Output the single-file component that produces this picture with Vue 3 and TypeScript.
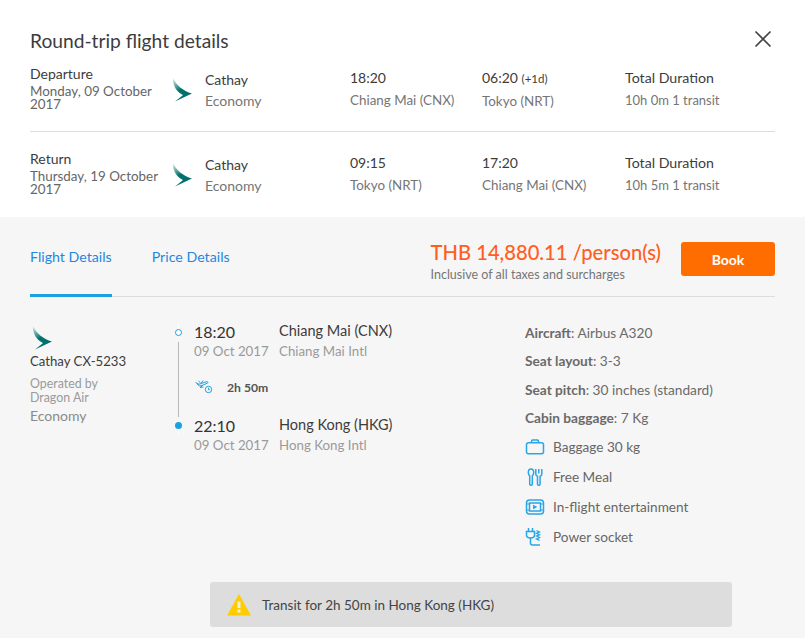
<script setup lang="ts">
interface Leg {
  label: string; date: string; dep: string; depCity: string; arr: string; arrSuffix?: string; arrCity: string; duration: string;
}
const legs: Leg[] = [
  { label: 'Departure', date: 'Monday, 09 October 2017', dep: '18:20', depCity: 'Chiang Mai (CNX)', arr: '06:20', arrSuffix: '(+1d)', arrCity: 'Tokyo (NRT)', duration: '10h 0m 1 transit' },
  { label: 'Return', date: 'Thursday, 19 October 2017', dep: '09:15', depCity: 'Tokyo (NRT)', arr: '17:20', arrCity: 'Chiang Mai (CNX)', duration: '10h 5m 1 transit' },
];
const specs = [
  { k: 'Aircraft', v: 'Airbus A320' },
  { k: 'Seat layout', v: '3-3' },
  { k: 'Seat pitch', v: '30 inches (standard)' },
  { k: 'Cabin baggage', v: '7 Kg' },
];
</script>

<template>
  <div class="page">
    <section class="top">
      <header class="head">
        <h1>Round-trip flight details</h1>
        <svg class="close" width="18" height="18" viewBox="0 0 18 18"><path d="M1.500 1.500l15 15M16.500 1.500l-15 15" stroke="#444" stroke-width="1.700" fill="none"/></svg>
      </header>
      <div v-for="(l, i) in legs" :key="l.label" class="leg" :class="{ second: i === 1 }">
        <div class="when">
          <div class="label">{{ l.label }}</div>
          <div class="date">{{ l.date }}</div>
        </div>
        <svg class="logo" width="22" height="25" viewBox="0 0 22 25">
          <defs><linearGradient :id="'g' + i" x1="0" y1="0" x2="0.3" y2="0.55"><stop offset="0" stop-color="#0f7a78" stop-opacity="0.12"/><stop offset="1" stop-color="#00706e"/></linearGradient></defs>
          <path d="M1 0C4 7 11 13 20 15.500L3 23.500C6 21 9 19 11 17C5 14 .5 8 1 0Z" :fill="'url(#g' + i + ')'"/>
        </svg>
        <div class="cell air"><div class="main">Cathay</div><div class="sub">Economy</div></div>
        <div class="cell"><div class="main">{{ l.dep }}</div><div class="sub">{{ l.depCity }}</div></div>
        <div class="cell"><div class="main">{{ l.arr }} <small v-if="l.arrSuffix">{{ l.arrSuffix }}</small></div><div class="sub">{{ l.arrCity }}</div></div>
        <div class="cell"><div class="main total">Total Duration</div><div class="sub dura">{{ l.duration }}</div></div>
      </div>
    </section>

    <section class="bottom">
      <div class="tabbar">
        <div class="tabs">
          <a class="tab active">Flight Details</a>
          <a class="tab">Price Details</a>
        </div>
        <div class="price">
          <div class="amount">THB 14,880.11 /person(s)</div>
          <div class="incl">Inclusive of all taxes and surcharges</div>
        </div>
        <button class="book">Book</button>
      </div>

      <div class="detail">
        <div class="carrier">
          <svg class="logo2" width="22" height="25" viewBox="0 0 22 25">
            <defs><linearGradient id="g9" x1="0" y1="0" x2="0.3" y2="0.55"><stop offset="0" stop-color="#0f7a78" stop-opacity="0.12"/><stop offset="1" stop-color="#00706e"/></linearGradient></defs>
            <path d="M1 0C4 7 11 13 20 15.500L3 23.500C6 21 9 19 11 17C5 14 .5 8 1 0Z" fill="url(#g9)"/>
          </svg>
          <div class="flightno">Cathay CX-5233</div>
          <div class="operated">Operated by<br>Dragon Air</div>
          <div class="cabin">Economy</div>
        </div>

        <div class="rail">
          <span class="stub"></span>
          <span class="dot hollow"></span>
          <span class="line"></span>
          <span class="dot filled"></span>
          <span class="stub"></span>
        </div>

        <div class="route">
          <div class="stop">
            <div class="time"><b>18:20</b><span>09 Oct 2017</span></div>
            <div class="place"><b>Chiang Mai (CNX)</b><span>Chiang Mai Intl</span></div>
          </div>
          <div class="dur">
            <svg width="18" height="14" viewBox="0 0 18 14" fill="none" stroke="#1ba0e2" stroke-width="1">
              <path d="M.5 2.500l3.500 1.800 7-2.500c1.800-.5 2.800.6 1.300 1.300L7 5.500 4.500 6 2 4"/>
              <path d="M3.500 1l2 1.800M8 .5L6.500 3M7.500 5.500L5 7.500l3.500-.5"/>
              <circle cx="13.500" cy="9.500" r="3.200"/>
              <path d="M13.500 7.800v1.900h1.300"/>
            </svg>
            <span>2h 50m</span>
          </div>
          <div class="stop">
            <div class="time"><b>22:10</b><span>09 Oct 2017</span></div>
            <div class="place"><b>Hong Kong (HKG)</b><span>Hong Kong Intl</span></div>
          </div>
        </div>

        <div class="facts">
          <div class="specs">
            <div v-for="s in specs" :key="s.k" class="spec"><b>{{ s.k }}</b>: {{ s.v }}</div>
          </div>
          <div class="amen">
            <svg width="20" height="16" viewBox="0 0 20 16" fill="none" stroke="#2aa5e6" stroke-width="1.500"><rect x="1.500" y="3.800" width="17" height="11" rx="2"/><path d="M6.500 3.500V2.200C6.500 1.500 7 1 7.700 1h4.600c.7 0 1.200.5 1.200 1.200v1.300"/></svg>
            <span>Baggage 30 kg</span>
          </div>
          <div class="amen">
            <svg width="20" height="18" viewBox="0 0 20 18" fill="none" stroke="#2aa5e6" stroke-width="1.500"><path d="M6 1c1.800 0 2.700 1.800 2.700 3.600 0 1.500-.7 2.700-1.400 3.200V16a1.300 1.300 0 0 1-2.600 0V7.800C4 7.300 3.300 6.100 3.300 4.600 3.300 2.800 4.200 1 6 1z"/><path d="M10.800 1v5c0 1.300.7 2 1.700 2.300V16a1.300 1.300 0 0 0 2.600 0V8.300c1-.3 1.700-1 1.700-2.300V1M13.800 1v4.500"/></svg>
            <span>Free Meal</span>
          </div>
          <div class="amen">
            <svg width="20" height="16" viewBox="0 0 20 16" fill="none" stroke="#2aa5e6" stroke-width="1.500"><rect x="1.500" y="1" width="17" height="14" rx="3"/><rect x="4.500" y="4" width="11" height="8"/><path d="M8 5.800l4.500 2.200L8 10.200z" fill="#2aa5e6" stroke="none"/><path d="M1.500 5h3M1.500 11h3M15.500 5h3M15.500 11h3" stroke-width="1"/></svg>
            <span>In-flight entertainment</span>
          </div>
          <div class="amen">
            <svg width="20" height="20" viewBox="0 0 20 20" fill="none" stroke="#2aa5e6" stroke-width="1.500"><path d="M3.500 1v3.500M7.500 1v3.500M1.500 4.500h8V8c0 1.800-1.700 3-4 3s-4-1.200-4-3z"/><path d="M5.500 11v5c0 1.200.8 2 2 2H15"/><path d="M11.500 3.500l3 1.400-3 1.400 3 1.400-3 1.400 3 1.400-3 1.400 3 1.400" stroke-width="1.300"/></svg>
            <span>Power socket</span>
          </div>
        </div>
      </div>

      <div class="alert">
        <svg width="24" height="22" viewBox="0 0 24 22"><path d="M12 0L24 21.500H0z" fill="#ffcc00"/><rect x="10.500" y="7.500" width="3" height="6.500" fill="#f0efe6"/><rect x="10.500" y="15.500" width="3" height="3" fill="#f0efe6"/></svg>
        <span>Transit for 2h 50m in Hong Kong (HKG)</span>
      </div>
    </section>
  </div>
</template>

<style>
html, body { margin: 0; background: #f6f6f6; }
</style>

<style scoped>
.page {
  width: 805px; height: 638px; overflow: hidden; display: flex; flex-direction: column;
  font-family: Lato, "Noto Sans", sans-serif; font-size: 14px; color: #3c3c3c; background: #f6f6f6;
}
.top { background: #fff; height: 217px; padding: 0 30px; box-sizing: border-box; flex: none; }
.head { height: 65px; display: flex; align-items: flex-start; justify-content: space-between; }
h1 { margin: 29px 0 0; font-size: 19.200px; line-height: 24px; font-weight: 400; color: #3c3c3c; }
.close { margin-top: 30px; margin-right: 3px; }
.leg {
  display: grid; grid-template-columns: 142px 33px 145px 132px 143px 1fr; align-items: start;
  height: 66px; border-bottom: 1px solid #ddd;
}
.leg.second { border-bottom: 0; margin-top: 18px; }
.label { font-size: 14px; line-height: 17px; color: #3c3c3c; }
.date { font-size: 13.400px; line-height: 13px; margin-top: 3px; color: #666; width: 135px; }
.logo { margin-top: 13px; }
.cell { padding-top: 4px; }
.cell.air { padding-top: 6px; }
.main { font-size: 14px; line-height: 17px; color: #3c3c3c; }
.main.total { font-size: 14.200px; }
.main small { font-size: 11.500px; }
.sub { font-size: 13.400px; line-height: 17px; margin-top: 6px; color: #757575; }
.cell.air .sub { font-size: 14px; margin-top: 4px; }
.sub.dura { font-size: 13px; }

.bottom { flex: 1; padding: 0 30px; }
.tabbar { display: flex; align-items: flex-start; height: 80px; border-bottom: 1px solid #ddd; box-sizing: border-box; }
.tabs { display: flex; gap: 40px; flex: 1; height: 80px; }
.tab { display: block; box-sizing: border-box; height: 80px; padding-top: 31px; line-height: 18px; font-size: 14.200px; color: #1f87e0; }
.tab.active { border-bottom: 3px solid #1ba0e2; }
.price { margin-top: 23px; margin-right: 20px; }
.amount { font-size: 20.200px; line-height: 24px; color: #ff5e1f; font-weight: 500; }
.incl { font-size: 12.500px; line-height: 14px; margin-top: 4px; color: #757575; }
.book {
  margin-top: 25px; width: 94px; height: 34px; border: 0; border-radius: 3px; background: #ff6d00;
  color: #fff; font: 700 14px Lato, sans-serif;
}

.detail { display: flex; align-items: flex-start; padding-top: 25px; height: 285px; box-sizing: border-box; }
.carrier { width: 145px; flex: none; margin-top: 4px; }
.logo2 { display: block; margin-left: 2px; }
.flightno { font-size: 13.200px; line-height: 16px; margin-top: 2px; color: #3c3c3c; }
.operated { font-size: 12.400px; line-height: 14px; margin-top: 8px; color: #9a9a9a; }
.cabin { font-size: 14px; line-height: 16px; margin-top: 3px; color: #8a8a8a; }

.rail { width: 19px; flex: none; display: flex; flex-direction: column; align-items: flex-start; margin-top: 2px; }
.stub { width: 1px; height: 5px; margin-left: 3px; background: #fff; }
.dot { width: 7px; height: 7px; border-radius: 50%; box-sizing: border-box; }
.dot.hollow { border: 1px solid #1ba0e2; background: #fff; }
.dot.filled { background: #1ba0e2; }
.line { width: 1px; height: 75px; margin: 6px 0 5px 3px; background: #b8b8b8; }

.route { width: 331px; flex: none; }
.stop { display: flex; }
.time { width: 85px; display: flex; flex-direction: column; }
.time b { font-weight: 400; font-size: 16px; line-height: 20px; color: #333; }
.time span, .place span { font-size: 13.300px; line-height: 18px; color: #9a9a9a; }
.place { display: flex; flex-direction: column; }
.place b { font-weight: 400; font-size: 14.500px; line-height: 18px; color: #3c3c3c; padding-bottom: 2px; }
.dur { display: flex; align-items: center; height: 54px; padding-bottom: 2px; gap: 14px; margin-left: 1px; }
.dur span { font-size: 12.200px; font-weight: 700; color: #555; }

.facts { flex: 1; padding-top: 2px; }
.specs { height: 108px; }
.spec { font-size: 13.700px; line-height: 18px; height: 28.400px; color: #6a6a6a; }
.spec b { font-weight: 700; color: #6a6a6a; }
.amen { display: flex; align-items: center; height: 30px; gap: 8px; font-size: 13.600px; color: #666; }
.amen svg { flex: none; }

.alert {
  margin-left: 180px; width: 522px; height: 45px; border-radius: 3px; background: #ddd;
  display: flex; align-items: center; gap: 11px; padding-left: 17px; box-sizing: border-box;
  font-size: 13.500px; color: #444;
}
</style>
